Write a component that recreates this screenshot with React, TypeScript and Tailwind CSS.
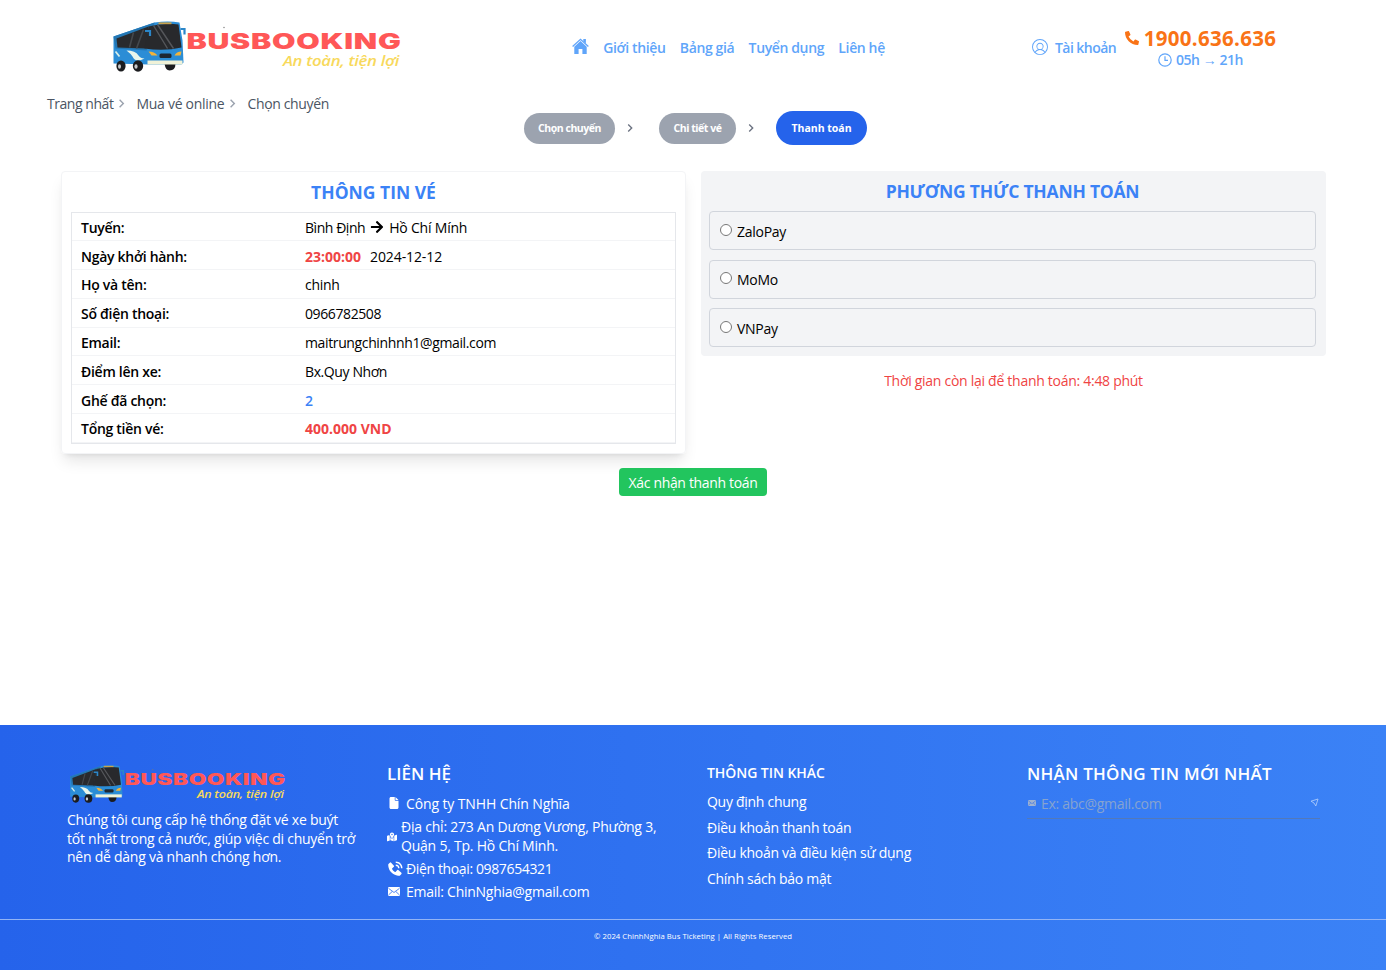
import React from "react";
import { FaPhoneAlt, FaArrowRight } from "react-icons/fa";
import { FaMapLocationDot, FaFile } from "react-icons/fa6";
import { PiUserCircleLight } from "react-icons/pi";
import { MdKeyboardArrowRight } from "react-icons/md";
import { BiSolidPhoneCall } from "react-icons/bi";

function Logo({ className }: { className: string }) {
  return (
    <svg viewBox="0 0 290 56" className={className} preserveAspectRatio="none">
      <g transform="translate(0.500 0.500)">
        <path d="M1 16 L42 2 Q56 0 67 2 L70 20 L71 42 L69 44 L36 44 L1 43 Z" fill="#2b8dd6" />
        <path d="M1 16 L42 2 L38 22 L34 30 L3 28 Z" fill="#2477b4" />
        <path d="M4 18 L36 6 L33 28 L5 27 Z" fill="#292a2d" />
        <path d="M21 12 L17 27 M31 9 L24 28" stroke="#44484d" strokeWidth="1.6" />
        <path d="M36 6 Q52 2 66 4 L69 27 Q52 31 32 28 Z" fill="#28292c" />
        <path d="M41 5 L55 28 M45 4 L61 28" stroke="#55575b" strokeWidth="1.4" />
        <path d="M46 2.800 h13" stroke="#c9a24c" strokeWidth="1.8" />
        <path d="M32.500 10.500 h5 v5 M68 8.500 h4 v5.500" fill="none" stroke="#2b86c8" strokeWidth="2.2" />
        <path d="M14 30 Q23 30 26 35 Q28 38 32 38 Q23 43 20 36 Q18 33 14 30Z" fill="#e8f6ec" />
        <path d="M3 31 l4 5" stroke="#d5eee8" strokeWidth="1.8" />
        <path d="M36 31 q6 0 9 4 h-6 z M69 31 q-5 0 -7 4 h6 z" fill="#f1b33b" />
        <rect x="47" y="33" width="12" height="4.500" rx="1.500" fill="#1d2733" />
        <path d="M52 43 h11 q0 7 -6 7 q-4 0 -5-7z" fill="#1b1c1f" />
        <path d="M35 40 h35 v4 h-35z" fill="#f0f2d8" />
        <ellipse cx="8.500" cy="45.500" rx="4.600" ry="5.500" fill="#1b1c1f" />
        <ellipse cx="25.500" cy="45.500" rx="5.200" ry="5.700" fill="#1b1c1f" />
        <ellipse cx="7" cy="46" rx="1.500" ry="2.200" fill="#c6c8ca" />
        <ellipse cx="23.500" cy="46" rx="1.600" ry="2.200" fill="#c6c8ca" />
      </g>
      <circle cx="112" cy="7.500" r="0.700" fill="#777" />
      <text x="74.500" y="28.500" textLength="215" lengthAdjust="spacingAndGlyphs" fontFamily="Inter, sans-serif" fontWeight="900" fontSize="21" letterSpacing="0.500" fill="#ff5757">BUSBOOKING</text>
      <text x="171" y="45.500" textLength="116" lengthAdjust="spacingAndGlyphs" fontFamily="Open Sans, sans-serif" fontStyle="italic" fontWeight="600" fontSize="14" fill="#f8d95c">An toàn, tiện lợi</text>
    </svg>
  );
}

function HomeIcon() {
  return (
    <svg viewBox="0 0 17 17" className="-mt-[1px] h-[17px] w-[17px]" fill="currentColor">
      <path d="M0.600 8.600 L8.500 1.300 L16.400 8.600" fill="none" stroke="currentColor" strokeWidth="1.300" />
      <path d="M11.300 1 h2.600 v4.600 l-2.600 -2.400z" />
      <path d="M8.500 3 L14.700 8.700 V16 H10.400 V11 H6.600 V16 H2.300 V8.700 Z" />
    </svg>
  );
}

function ClockIcon() {
  return (
    <svg viewBox="0 0 14 14" className="mt-[2px] size-[14px]" fill="none" stroke="currentColor" strokeWidth="1.200">
      <circle cx="7" cy="7" r="6.200" />
      <path d="M7 3.200 V7.300 H10" />
    </svg>
  );
}

function MailIcon({ className }: { className: string }) {
  return (
    <svg viewBox="0 0 12 9" className={className}>
      <rect width="12" height="9" rx="1" fill="currentColor" />
      <path d="M0.500 1.300 L6 5.500 L11.500 1.300 M0.500 8 L4.200 4.500 M11.500 8 L7.800 4.500" fill="none" stroke="#2b6cee" strokeWidth="0.800" />
    </svg>
  );
}

const nav = ["Giới thiệu", "Bảng giá", "Tuyển dụng", "Liên hệ"];

const rows: [string, React.ReactNode][] = [
  ["Tuyến:", <span className="flex items-center"><span className="tracking-[-0.45px]">Bình Định</span><FaArrowRight className="mx-[5px] size-[14px]" /><span className="tracking-[-0.2px]">Hồ Chí Mính</span></span>],
  ["Ngày khởi hành:", <><span className="mr-[9px] font-bold tracking-normal text-[#ef4444]">23:00:00</span><span className="tracking-[-0.1px]">2024-12-12</span></>],
  ["Họ và tên:", "chinh"],
  ["Số điện thoại:", <span className="tracking-[-0.4px]">0966782508</span>],
  ["Email:", <span className="tracking-[-0.37px]">maitrungchinhnh1@gmail.com</span>],
  ["Điểm lên xe:", <span className="tracking-[-0.4px]">Bx.Quy Nhơn</span>],
  ["Ghế đã chọn:", <span className="font-semibold text-[#3b82f6]">2</span>],
  ["Tổng tiền vé:", <span className="font-bold tracking-normal text-[#ef4444]">400.000 VND</span>],
];

export default function App() {
  return (
    <div className="flex h-[970px] w-[1386px] flex-col overflow-hidden bg-white font-['Open_Sans',sans-serif] text-[14px] leading-[19px] tracking-[-0.28px] text-black">
      <header className="flex h-[94px] shrink-0 items-center text-[#60a5fa]">
        <Logo className="mt-[2px] ml-[112px] h-[56px] w-[290px]" />
        <nav className="ml-[170px] flex w-[459px] items-center gap-[14.300px] font-semibold tracking-[-0.37px]">
          <HomeIcon />
          {nav.map((n) => <a key={n}>{n}</a>)}
        </nav>
        <div className="-ml-[1px] flex w-[85px] items-center gap-[5px] font-semibold tracking-[-0.55px] whitespace-nowrap">
          <PiUserCircleLight className="-mt-[1px] size-[20px] shrink-0" />
          Tài khoản
        </div>
        <div className="ml-[9px] flex w-[153px] flex-col items-center">
          <div className="flex items-center gap-[5px] text-[20.500px] leading-[24px] font-bold tracking-[0.32px] text-[#f97316]">
            <FaPhoneAlt className="size-[14px]" />1900.636.636
          </div>
          <div className="flex items-center gap-1 leading-[19px] font-semibold tracking-[-0.45px]"><ClockIcon /><span>05h → 21h</span></div>
        </div>
      </header>

      <div className="ml-[47px] flex h-[19px] shrink-0 items-center text-[#4b5563]">
        <span className="tracking-[-0.45px]">Trang nhất</span><MdKeyboardArrowRight className="mr-[6px] size-[17px] text-[#9ca3af]" />
        Mua vé online<MdKeyboardArrowRight className="mr-[6px] size-[17px] text-[#9ca3af]" />
        <span className="tracking-[-0.35px]">Chọn chuyến</span>
      </div>

      <div className="-mt-[2px] ml-[524px] flex h-[34px] shrink-0 items-center text-[10.500px] font-bold tracking-[-0.45px] text-white">
        <span className="flex h-[31px] w-[91px] items-center justify-center rounded-full bg-[#9ca3af]">Chọn chuyến</span>
        <MdKeyboardArrowRight className="mr-[21px] ml-[7px] size-[16px] text-[#6b7280]" />
        <span className="flex h-[31px] w-[77px] items-center justify-center rounded-full bg-[#9ca3af]">Chi tiết vé</span>
        <MdKeyboardArrowRight className="mr-[17px] ml-[7px] size-[16px] text-[#6b7280]" />
        <span className="flex h-[34px] w-[91px] items-center justify-center rounded-full bg-[#2563eb] tracking-normal">Thanh toán</span>
      </div>

      <main className="mt-[26px] flex shrink-0 items-start gap-[15px] px-[61px]">
        <section className="h-[283px] w-[625px] shrink-0 rounded border border-gray-100 px-[9px] shadow-lg">
          <h2 className="flex h-[39.500px] items-center justify-center pt-[1px] text-[17.500px] font-bold tracking-normal text-[#3b82f6]">THÔNG TIN VÉ</h2>
          <div className="border border-gray-200">
            {rows.map(([label, value]) => (
              <div key={label} className="flex h-[28.800px] items-center border-b border-gray-100 pt-[2px] pl-[9px]">
                <span className="w-[224px] font-semibold">{label}</span>
                <span>{value}</span>
              </div>
            ))}
          </div>
        </section>
        <section className="w-[625px] shrink-0">
          <div className="h-[185px] rounded bg-gray-100 pr-[10px] pl-[8px]">
            <h2 className="flex h-[40px] items-center justify-center pt-[1px] text-[17.500px] font-bold tracking-[-0.22px] text-[#3b82f6]">PHƯƠNG THỨC THANH TOÁN</h2>
            <div className="flex flex-col gap-[9.500px]">
              {["ZaloPay", "MoMo", "VNPay"].map((m) => (
                <label key={m} className="flex h-[39px] items-center rounded border border-gray-300 pl-[10px]">
                  <input type="radio" name="method" className="mr-[5px] mb-[2px] size-[12px]" />
                  <span className="pt-[1px]">{m}</span>
                </label>
              ))}
            </div>
          </div>
          <p className="mt-[15px] text-center text-[#ef4444]">Thời gian còn lại để thanh toán: 4:48 phút</p>
        </section>
      </main>

      <button className="mt-[14px] h-[28px] w-[148px] shrink-0 self-center rounded bg-[#22c55e] tracking-[-0.34px] text-white">Xác nhận thanh toán</button>

      <footer className="mt-auto h-[245px] shrink-0 bg-linear-to-r/srgb from-[#2563eb] to-[#3b82f6] text-white">
        <div className="flex h-[194px] pl-[67px]">
          <div className="w-[320px] pt-[39px]">
            <Logo className="ml-[2px] h-[42px] w-[217px]" />
            <p className="mt-[5px] leading-[18.700px] tracking-[-0.25px] whitespace-nowrap">Chúng tôi cung cấp hệ thống đặt vé xe buýt<br />tốt nhất trong cả nước, giúp việc di chuyển trở<br />nên dễ dàng và nhanh chóng hơn.</p>
          </div>
          <div className="w-[320px] pt-[38px] tracking-[-0.22px]">
            <h3 className="mb-[9px] text-[17px] leading-[22px] font-semibold tracking-normal">LIÊN HỆ</h3>
            <div className="flex items-center tracking-[-0.12px]"><FaFile className="-mt-[1px] mr-[6px] ml-[1px] size-[12px]" />Công ty TNHH Chín Nghĩa</div>
            <div className="mt-[5px] flex items-center leading-[18.700px]"><FaMapLocationDot className="mr-[4px] size-[10px]" /><span className="whitespace-nowrap">Địa chỉ: 273 An Dương Vương, Phường 3,<br />Quận 5, Tp. Hồ Chí Minh.</span></div>
            <div className="mt-[4px] flex items-center tracking-[-0.37px]"><BiSolidPhoneCall className="mr-[2px] -ml-[1px] size-[18px]" />Điện thoại: 0987654321</div>
            <div className="mt-[4px] flex items-center tracking-[-0.26px]"><MailIcon className="mr-[6px] ml-[1px] h-[9px] w-[12px]" />Email: ChinNghia@gmail.com</div>
          </div>
          <div className="w-[320px] pt-[38px]">
            <h3 className="mb-[9px] leading-[20px] font-semibold tracking-[-0.06px]">THÔNG TIN KHÁC</h3>
            <div className="flex flex-col gap-[6.700px]">
              {["Quy định chung", "Điều khoản thanh toán", "Điều khoản và điều kiện sử dụng", "Chính sách bảo mật"].map((t) => <a key={t}>{t}</a>)}
            </div>
          </div>
          <div className="w-[293px] pt-[38px]">
            <h3 className="mb-[9px] text-[17px] leading-[22px] font-semibold tracking-[0.24px] whitespace-nowrap">NHẬN THÔNG TIN MỚI NHẤT</h3>
            <div className="flex h-[25px] items-start border-b border-[#5279ba] text-[#86a3cf]">
              <MailIcon className="mt-[6px] mr-[5px] ml-[1px] h-[6px] w-[8px] text-[#9fb2d0]" />
              <span>Ex: abc@gmail.com</span>
              <svg viewBox="0 0 9 9" className="mt-[4px] mr-[1px] ml-auto size-[9px]" fill="none" stroke="#a9c8fb" strokeWidth="0.900"><path d="M1 3.200 L8 1 L5.800 8 L4 5 Z" /></svg>
            </div>
          </div>
        </div>
        <div className="border-t border-[#93b4f5] pt-[8px] text-center text-[7.700px] leading-[16px] tracking-[0.06px]">© 2024 ChinhNghia Bus Ticketing | All Rights Reserved</div>
      </footer>
    </div>
  );
}
